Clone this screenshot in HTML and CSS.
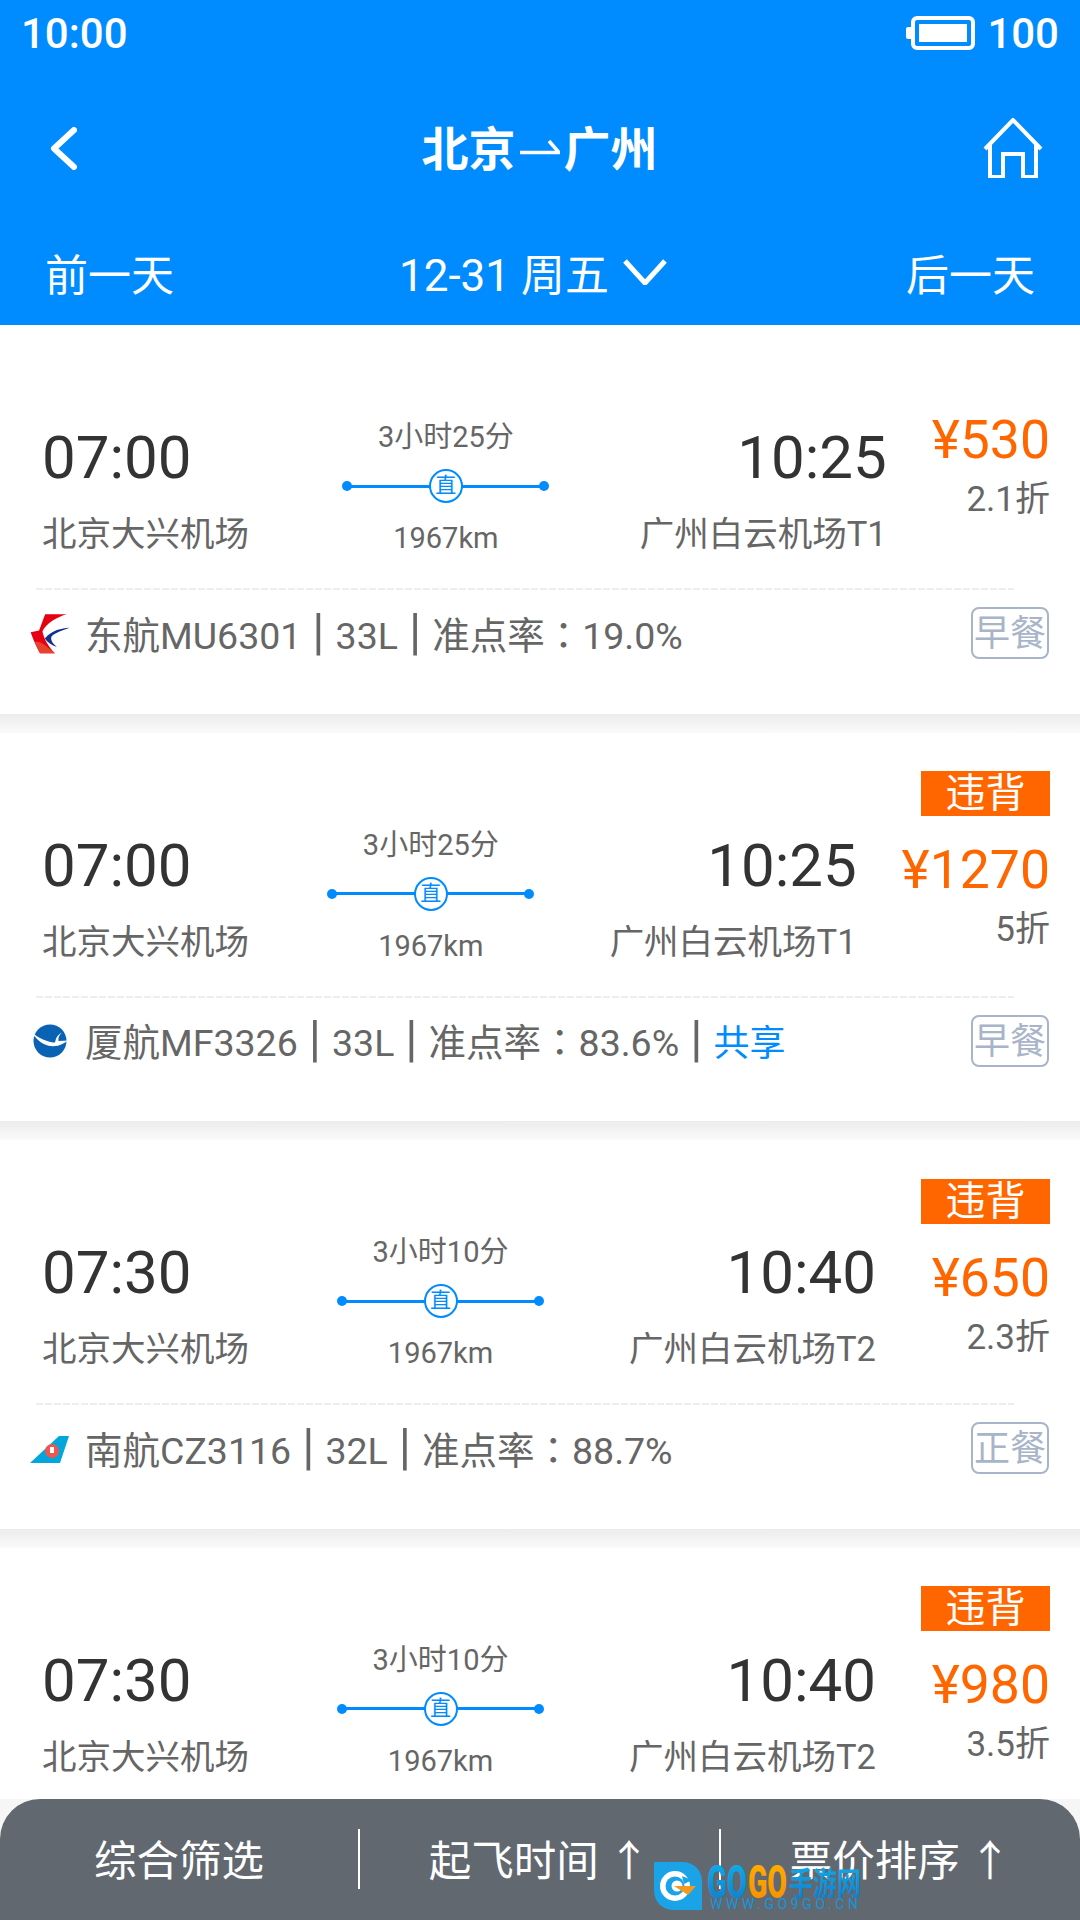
FILE: index.html
```html
<!DOCTYPE html>
<html lang="zh-CN">
<head>
  <meta charset="UTF-8" />
  <title>北京-广州 航班列表</title>
  <link rel="stylesheet" href="styles.css">
</head>
<body>
<div class="page">
  <header class="top">
    <div class="status">
      <span>10:00</span>
      <div class="status-right">
        <span class="battery"><span class="battery-fill"></span></span>
        <span>100</span>
      </div>
    </div>
    <div class="nav">
      <svg class="back" viewBox="0 0 27 43" width="27" height="43"><path d="M24 3 L4 21.5 L24 40"/></svg>
      <div class="title">北京<svg class="harpoon" viewBox="0 0 40 20" width="40" height="20"><path d="M0 15.5 H39 L29 4"/></svg>广州</div>
      <svg class="home" viewBox="0 0 60 60" width="60" height="60"><path d="M2 31 L30 2 L58 31 M7 27 V59 H20 V36 H40 V59 H53 V27"/></svg>
    </div>
    <div class="dates">
      <span>前一天</span>
      <div class="date-now">12-31 周五
        <svg class="date-arrow" viewBox="0 0 44 26" width="44" height="26"><path d="M2 2 L22 24 L42 2"/></svg>
      </div>
      <span>后一天</span>
    </div>
  </header>

  <main class="list">
    <section class="flight">
      <div class="row">
        <div class="side">
          <div class="time">07:00</div>
          <div class="airport">北京大兴机场</div>
        </div>
        <div class="middle">
          <div class="info">3小时25分</div>
          <div class="track"><span class="stop">直</span></div>
          <div class="info">1967km</div>
        </div>
        <div class="side side-right">
          <div class="time">10:25</div>
          <div class="airport">广州白云机场T1</div>
        </div>
        <div class="fare">
          <div class="price">¥530</div>
          <div class="discount">2.1折</div>
        </div>
      </div>
      <div class="rule"></div>
      <div class="foot">
        <div class="carrier">
          <svg class="logo" viewBox="55 38 125 125" width="42" height="42">
            <path fill="#e60012" d="M103 42 H167 C135 52 107 68 95 93 C100 118 115 140 132 158 H88 C80 145 68 118 60 95 L85 90 Z"/>
            <path fill="#e8412e" d="M72 125 C85 120 100 130 132 158 H88 Z"/>
            <path fill="#12318f" d="M176 82 C150 84 125 88 102 114 C110 125 122 134 138 139 C125 128 118 118 122 108 C130 98 155 90 176 82 Z"/>
          </svg>
          <span>东航MU6301<span class="sep">|</span>33L<span class="sep">|</span>准点率<span class="colon" lang="zh-TW">：</span>19.0%</span>
        </div>
        <div class="meal">早餐</div>
      </div>
    </section>

    <section class="flight">
      <div class="row">
        <div class="side">
          <div class="time">07:00</div>
          <div class="airport">北京大兴机场</div>
        </div>
        <div class="middle">
          <div class="info">3小时25分</div>
          <div class="track"><span class="stop">直</span></div>
          <div class="info">1967km</div>
        </div>
        <div class="side side-right">
          <div class="time">10:25</div>
          <div class="airport">广州白云机场T1</div>
        </div>
        <div class="fare">
          <div class="badge">违背</div>
          <div class="price">¥1270</div>
          <div class="discount">5折</div>
        </div>
      </div>
      <div class="rule"></div>
      <div class="foot">
        <div class="carrier">
          <svg class="logo" viewBox="0 0 42 42" width="42" height="42">
            <circle cx="21" cy="21" r="16.5" fill="#0a62b4"/>
            <path fill="#fff" d="M1 11 C6 15 10 18 14 19.5 C18 21 23 23 26 22.5 C27 19 27 16 33 12.5 C30 15 29 18 29.5 21 L39.5 20.5 C34 24 30 26 26 26 C20 27 13 24 8 19 Z"/>
          </svg>
          <span>厦航MF3326<span class="sep">|</span>33L<span class="sep">|</span>准点率<span class="colon" lang="zh-TW">：</span>83.6%<span class="sep">|</span><span class="share">共享</span></span>
        </div>
        <div class="meal">早餐</div>
      </div>
    </section>

    <section class="flight">
      <div class="row">
        <div class="side">
          <div class="time">07:30</div>
          <div class="airport">北京大兴机场</div>
        </div>
        <div class="middle">
          <div class="info">3小时10分</div>
          <div class="track"><span class="stop">直</span></div>
          <div class="info">1967km</div>
        </div>
        <div class="side side-right">
          <div class="time">10:40</div>
          <div class="airport">广州白云机场T2</div>
        </div>
        <div class="fare">
          <div class="badge">违背</div>
          <div class="price">¥650</div>
          <div class="discount">2.3折</div>
        </div>
      </div>
      <div class="rule"></div>
      <div class="foot">
        <div class="carrier">
          <svg class="logo" viewBox="0 0 42 42" width="42" height="42">
            <path fill="#00a6dc" d="M1 35 L30 8 H40 L31 35 Z"/>
            <circle cx="23" cy="23" r="7" fill="#f0554e"/>
            <path fill="#fff" d="M21 19 H25 V25 H21 Z"/>
          </svg>
          <span>南航CZ3116<span class="sep">|</span>32L<span class="sep">|</span>准点率<span class="colon" lang="zh-TW">：</span>88.7%</span>
        </div>
        <div class="meal">正餐</div>
      </div>
    </section>

    <section class="flight">
      <div class="row">
        <div class="side">
          <div class="time">07:30</div>
          <div class="airport">北京大兴机场</div>
        </div>
        <div class="middle">
          <div class="info">3小时10分</div>
          <div class="track"><span class="stop">直</span></div>
          <div class="info">1967km</div>
        </div>
        <div class="side side-right">
          <div class="time">10:40</div>
          <div class="airport">广州白云机场T2</div>
        </div>
        <div class="fare">
          <div class="badge">违背</div>
          <div class="price">¥980</div>
          <div class="discount">3.5折</div>
        </div>
      </div>
    </section>
  </main>

  <div class="bar-wrap">
    <footer class="bar">
      <div class="bar-item">综合筛选</div>
      <div class="bar-item">起飞时间<span class="up">↑</span></div>
      <div class="bar-item">票价排序<span class="up">↑</span></div>
    </footer>
  </div>

  <!-- watermark sits over the bar -->
  <div class="mark">
    <svg class="mark-icon" viewBox="0 0 48 48" width="48" height="48">
      <path fill="#1aa3e6" d="M0 0 H28 C40 0 48 8 48 20 V48 H20 C8 48 0 40 0 28 Z"/>
      <circle cx="21" cy="24" r="15" fill="#fff"/>
      <circle cx="21" cy="24" r="9.5" fill="#1aa3e6"/>
      <circle cx="23" cy="24" r="5.5" fill="#fff"/>
      <path fill="#1aa3e6" d="M28 14 L38 18 L30 22 Z"/>
      <path fill="#f39a1e" d="M20 24 H42 L34 33 Z"/>
    </svg>
    <svg class="mark-text" viewBox="0 0 154 48" width="154" height="48">
      <defs>
        <linearGradient id="markBlue" x1="0" y1="0" x2="0" y2="1"><stop offset="0" stop-color="#10b4ee"/><stop offset="1" stop-color="#0f78c8"/></linearGradient>
        <linearGradient id="markOrange" x1="0" y1="0" x2="0" y2="1"><stop offset="0" stop-color="#ffb400"/><stop offset="1" stop-color="#f58a00"/></linearGradient>
      </defs>
      <text class="mark-go" x="0" y="36" textLength="40" lengthAdjust="spacingAndGlyphs" fill="url(#markBlue)">GO</text>
      <text class="mark-go" x="41" y="36" textLength="39" lengthAdjust="spacingAndGlyphs" fill="url(#markOrange)">GO</text>
      <text class="mark-cn" x="82" y="33" textLength="72" lengthAdjust="spacingAndGlyphs" fill="url(#markBlue)">手游网</text>
      <text class="mark-url" x="3" y="47" textLength="148" fill="#1296dc">WWW.GO9GO.CN</text>
    </svg>
  </div>
</div>
</body>
</html>
```

FILE: styles.css
```css
* { box-sizing: border-box; }
body {
  margin: 0;
  font-family: Roboto, "Noto Sans CJK SC", sans-serif;
  background: #fff;
}
.page {
  position: relative;
  width: 1080px;
  height: 1920px;
  overflow: hidden;
}

/* header */
.top {
  height: 325px;
  background: #008cff;
  color: #fff;
}
.status {
  height: 66px;
  padding: 0 21px;
  display: flex;
  justify-content: space-between;
  align-items: center;
  font-size: 42px;
  font-weight: 500;
}
.status-right {
  display: flex;
  align-items: center;
  gap: 12px;
}
.battery {
  position: relative;
  width: 64px;
  height: 34px;
  margin-left: 4px;
  border: 4px solid #fff;
  border-radius: 6px;
  padding: 4px;
  display: block;
}
.battery::before {
  content: "";
  position: absolute;
  left: -9px;
  top: 7px;
  width: 5px;
  height: 12px;
  background: #fff;
  border-radius: 2px 0 0 2px;
}
.battery-fill {
  display: block;
  width: 100%;
  height: 100%;
  background: #fff;
}
.nav {
  height: 164px;
  padding: 0 37px 0 50px;
  display: grid;
  grid-template-columns: 60px 1fr 60px;
  align-items: center;
}
.back path, .home path, .date-arrow path, .harpoon path {
  fill: none;
  stroke: #fff;
}
.back path { stroke-width: 6; stroke-linecap: round; stroke-linejoin: round; }
.home path { stroke-width: 4; }
.date-arrow path { stroke-width: 5; }
.harpoon path { stroke-width: 3.5; }
.home { justify-self: end; }
.title {
  display: flex;
  justify-content: center;
  align-items: center;
  padding-bottom: 6px;
  font-size: 47px;
  font-weight: 700;
  margin-right: 14px;
}
.harpoon { margin: 4px 4px 0; }
.dates {
  height: 95px;
  padding: 0 45px 11px;
  display: flex;
  justify-content: space-between;
  align-items: center;
  font-size: 43px;
}
.date-now {
  display: flex;
  align-items: center;
  gap: 14px;
  margin-right: 14px;
  font-size: 44px;
}

/* flights */
.flight {
  background: #fff;
}
.flight::after {
  content: "";
  display: block;
  height: 19px;
  background: linear-gradient(#ececec, #fafafa);
}
.row {
  height: 263px;
  padding: 69px 30px 0 42px;
  display: flex;
  align-items: center;
}
.side { flex: none; }
.side-right { text-align: right; }
.time {
  font-size: 60px;
  line-height: 70px;
  color: #333;
}
.airport {
  margin-top: 16px;
  font-size: 34.5px;
  line-height: 50px;
  color: #666;
}
.middle {
  flex: 1;
  padding: 0 0 7px 3px;
  display: flex;
  flex-direction: column;
  align-items: center;
}
.info {
  font-size: 29px;
  line-height: 40px;
  color: #666;
}
.track {
  position: relative;
  width: 201px;
  height: 34px;
  margin: 12px 0 15px;
  display: flex;
  justify-content: center;
  background: linear-gradient(#008cff, #008cff) center / 100% 3px no-repeat;
}
.track::before, .track::after {
  content: "";
  position: absolute;
  top: 12px;
  width: 10px;
  height: 10px;
  border-radius: 50%;
  background: #008cff;
}
.track::before { left: -3px; }
.track::after { right: -3px; }
.stop {
  width: 34px;
  height: 34px;
  border: 2px solid #008cff;
  border-radius: 50%;
  background: #fff;
  color: #008cff;
  font-size: 21px;
  line-height: 29px;
  text-align: center;
}
.fare {
  flex: none;
  margin-left: 45px;
  margin-bottom: 76px;
  display: flex;
  flex-direction: column;
  align-items: flex-end;
}
.badge {
  width: 129px;
  height: 45px;
  background: #ff6600;
  color: #fff;
  font-size: 40px;
  line-height: 45px;
  text-align: center;
}
.price {
  margin-top: 24px;
  font-size: 53.5px;
  line-height: 60px;
  color: #ff6600;
}
.discount {
  margin-top: 10px;
  font-size: 35px;
  line-height: 40px;
  color: #666;
}
.rule {
  height: 2px;
  margin: 0 66px 0 36px;
  background: repeating-linear-gradient(90deg, #eee 0 7px, transparent 7px 9px);
}
.foot {
  height: 123.5px;
  padding: 17px 31px 0 30px;
  display: flex;
  justify-content: space-between;
  align-items: flex-start;
}
.carrier {
  display: flex;
  align-items: center;
  gap: 14px;
  height: 50px;
  margin-left: -1px;
  font-size: 37.5px;
  color: #666;
}
.logo { margin-top: 3px; }
.sep {
  margin: 0 11px;
  font-size: 50px;
  line-height: 1;
}
.colon { font-family: "Noto Sans CJK TC", sans-serif; }
.share { color: #008cff; font-size: 36px; }
.meal {
  width: 78px;
  height: 52px;
  border: 2px solid #a8b4c8;
  border-radius: 8px;
  color: #a8b4c8;
  font-size: 36px;
  line-height: 50px;
  text-align: center;
  white-space: nowrap;
}

/* bottom bar */
.bar-wrap {
  position: absolute;
  left: 0;
  right: 0;
  top: 1799px;
  height: 121px;
  background: #f6f6f6;
}
.bar {
  height: 121px;
  padding-top: 30px;
  background: #62686f;
  border-radius: 40px 40px 0 0;
  display: grid;
  grid-template-columns: 358px 361px 361px;
  align-items: start;
  color: #fff;
  font-size: 42.5px;
}
.bar-item {
  height: 60px;
  line-height: 66px;
  text-align: center;
  border-left: 2px solid #fff;
}
.bar-item:first-child { border-left: none; }
.up { margin-left: 9px; font-family: "Noto Sans CJK SC", sans-serif; line-height: 0; }

/* watermark */
.mark {
  position: absolute;
  left: 654px;
  top: 1862px;
  display: flex;
  gap: 5px;
}
.mark-go { font-family: Roboto, sans-serif; font-weight: 900; font-size: 46px; }
.mark-cn { font-family: "Noto Sans CJK SC", sans-serif; font-weight: 700; font-size: 32px; }
.mark-url { font-family: Roboto, sans-serif; font-size: 14px; }
```
